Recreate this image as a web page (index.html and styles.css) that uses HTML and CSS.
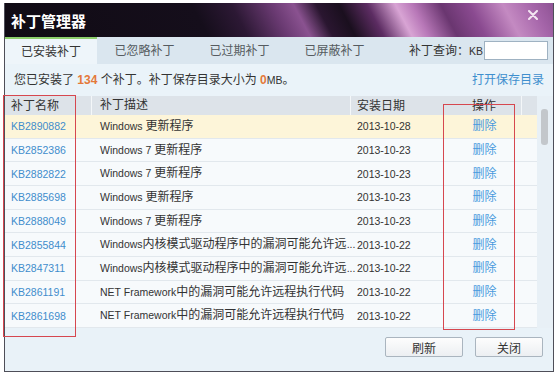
FILE: index.html
```html
<!DOCTYPE html>
<html lang="zh-CN">
<head>
    <meta charset="UTF-8">
    <title>补丁管理器</title>
    <link rel="stylesheet" href="styles.css">
</head>
<body>
    <!-- 对话框 -->
    <div class="dialog">
        <div class="titlebar">
            <div class="title">补丁管理器</div>
            <div class="close">
                <svg viewBox="0 0 10 10" width="10" height="10">
                    <path d="M1 1L9 9M9 1L1 9" stroke="#f3e6f2" stroke-width="2" stroke-linecap="round"/>
                </svg>
            </div>
        </div>

        <!-- 标签页 -->
        <div class="tabs">
            <div class="tab active">已安装补丁</div>
            <div class="tab">已忽略补丁</div>
            <div class="tab">已过期补丁</div>
            <div class="tab">已屏蔽补丁</div>
            <div class="search">
                <span>补丁查询：<span class="lat">KB</span></span>
                <input class="search-input" type="text">
            </div>
        </div>

        <div class="info">
            <div>您已安装了 <b class="num">134</b> 个补丁。补丁保存目录大小为 <b class="num">0</b><span class="lat">MB</span>。</div>
            <a class="link">打开保存目录</a>
        </div>

        <!-- 补丁列表 -->
        <div class="list">
            <div class="table">
                <div class="row head">
                    <div class="cell c-name">补丁名称</div>
                    <div class="cell c-desc">补丁描述</div>
                    <div class="cell c-date">安装日期</div>
                    <div class="cell c-op">操作</div>
                    <div class="cell c-pad"></div>
                </div>
                <div class="row selected">
                    <div class="cell c-name kb">KB2890882</div>
                    <div class="cell c-desc"><span class="lat">Windows </span>更新程序</div>
                    <div class="cell c-date">2013-10-28</div>
                    <div class="cell c-op"><a class="del">删除</a></div>
                    <div class="cell c-pad"></div>
                </div>
                <div class="row">
                    <div class="cell c-name kb">KB2852386</div>
                    <div class="cell c-desc"><span class="lat">Windows 7 </span>更新程序</div>
                    <div class="cell c-date">2013-10-23</div>
                    <div class="cell c-op"><a class="del">删除</a></div>
                    <div class="cell c-pad"></div>
                </div>
                <div class="row">
                    <div class="cell c-name kb">KB2882822</div>
                    <div class="cell c-desc"><span class="lat">Windows 7 </span>更新程序</div>
                    <div class="cell c-date">2013-10-23</div>
                    <div class="cell c-op"><a class="del">删除</a></div>
                    <div class="cell c-pad"></div>
                </div>
                <div class="row">
                    <div class="cell c-name kb">KB2885698</div>
                    <div class="cell c-desc"><span class="lat">Windows </span>更新程序</div>
                    <div class="cell c-date">2013-10-23</div>
                    <div class="cell c-op"><a class="del">删除</a></div>
                    <div class="cell c-pad"></div>
                </div>
                <div class="row">
                    <div class="cell c-name kb">KB2888049</div>
                    <div class="cell c-desc"><span class="lat">Windows 7 </span>更新程序</div>
                    <div class="cell c-date">2013-10-23</div>
                    <div class="cell c-op"><a class="del">删除</a></div>
                    <div class="cell c-pad"></div>
                </div>
                <div class="row">
                    <div class="cell c-name kb">KB2855844</div>
                    <div class="cell c-desc"><span class="lat">Windows</span>内核模式驱动程序中的漏洞可能允许远<span class="lat">...</span></div>
                    <div class="cell c-date">2013-10-22</div>
                    <div class="cell c-op"><a class="del">删除</a></div>
                    <div class="cell c-pad"></div>
                </div>
                <div class="row">
                    <div class="cell c-name kb">KB2847311</div>
                    <div class="cell c-desc"><span class="lat">Windows</span>内核模式驱动程序中的漏洞可能允许远<span class="lat">...</span></div>
                    <div class="cell c-date">2013-10-22</div>
                    <div class="cell c-op"><a class="del">删除</a></div>
                    <div class="cell c-pad"></div>
                </div>
                <div class="row">
                    <div class="cell c-name kb">KB2861191</div>
                    <div class="cell c-desc"><span class="lat">NET Framework</span>中的漏洞可能允许远程执行代码</div>
                    <div class="cell c-date">2013-10-22</div>
                    <div class="cell c-op"><a class="del">删除</a></div>
                    <div class="cell c-pad"></div>
                </div>
                <div class="row">
                    <div class="cell c-name kb">KB2861698</div>
                    <div class="cell c-desc"><span class="lat">NET Framework</span>中的漏洞可能允许远程执行代码</div>
                    <div class="cell c-date">2013-10-22</div>
                    <div class="cell c-op"><a class="del">删除</a></div>
                    <div class="cell c-pad"></div>
                </div>
            </div>
            <div class="scrollbar">
                <div class="thumb"></div>
            </div>
        </div>

        <div class="footer">
            <button class="btn btn-refresh">刷新</button>
            <button class="btn btn-close">关闭</button>
        </div>
    </div>

    <!-- 标注框 -->
    <div class="mark mark-name"></div>
    <div class="mark mark-op"></div>
</body>
</html>
```

FILE: styles.css
```css
/* 기본 */
* {
    margin: 0;
    padding: 0;
    box-sizing: border-box;
}

body {
    width: 559px;
    height: 377px;
    overflow: hidden;
    background: #ffffff;
    font-family: "Liberation Sans", "Noto Sans CJK SC", sans-serif;
    font-size: 12px;
    line-height: 16px;
    color: #333333;
    position: relative;
}

.lat {
    font-size: 10.5px;
}

/* 对话框 */
.dialog {
    margin: 3px 0 0 4px;
    width: 550px;
    height: 369px;
    border: 1px solid #4e4e58;
    border-top: none;
    background: #e9f2f8;
    display: flex;
    flex-direction: column;
}

.titlebar {
    height: 34px;
    display: flex;
    justify-content: space-between;
    align-items: flex-start;
    background:
        linear-gradient(62deg,
            #100b14 0%, #150e1b 36%, #2c1834 43%, #6a3a72 50%,
            #8a5290 54%, #2a1630 58%, #1a0f1e 62%, #5c2c62 67%,
            #d8a4d4 72%, #b878b8 75%, #6a3670 80%, #8a4a90 85%,
            #c48ac2 91%, #a666aa 96%, #8e5294 100%);
}

.title {
    padding: 9px 0 0 6px;
    font-family: "Noto Sans CJK SC", sans-serif;
    font-size: 15px;
    font-weight: bold;
    line-height: 18px;
    color: #ffffff;
}

.close {
    margin: 7px 15px 0 0;
    width: 10px;
    height: 10px;
}

.close svg {
    display: block;
}

/* 标签页 */
.tabs {
    height: 27px;
    display: flex;
    align-items: stretch;
    background: #dae6ef;
}

.tab {
    width: 95px;
    display: flex;
    align-items: center;
    justify-content: center;
    color: #555b60;
}

.tab.active {
    width: 92px;
    background: #eef5fa;
    border-top: 2px solid #8dcf6c;
    color: #333333;
}

.search {
    margin-left: auto;
    padding-right: 5px;
    display: flex;
    align-items: center;
    gap: 1px;
}

.search-input {
    width: 64px;
    height: 19px;
    border: 1px solid #9fb2c2;
    background: #ffffff;
}

/* 提示行 */
.info {
    height: 32px;
    padding: 0 9px;
    display: flex;
    align-items: center;
    justify-content: space-between;
    background: #eaf3f9;
}

.num {
    color: #e4793a;
}

.link {
    color: #3e8fce;
}

/* 列表 */
.list {
    height: 232px;
    display: flex;
}

.table {
    width: 532px;
    display: flex;
    flex-direction: column;
}

.row {
    height: 23.67px;
    display: grid;
    grid-template-columns: 87px 259px 94px 77px 15px;
    background: #f7fafc;
    border-bottom: 1px solid #e2e8ed;
}

.row.head {
    height: 19px;
    background: #dde3e9;
    border-bottom: none;
}

.row.selected {
    background: #fdf5d9;
}

.cell {
    display: flex;
    align-items: center;
    white-space: nowrap;
    overflow: hidden;
}

.c-name {
    padding-left: 6px;
}

.c-desc {
    display: block;
    padding-left: 8px;
    line-height: 22px;
    overflow: visible;
}

.row.head .c-desc {
    line-height: 19px;
}

.c-date {
    padding-left: 6px;
    font-size: 10.5px;
}

.row.head .c-date {
    font-size: 12px;
}

.c-op {
    justify-content: center;
    padding-left: 2px;
}

.row.head .c-name,
.row.head .c-desc,
.row.head .c-op {
    border-right: 1px solid #f4f7f9;
}

.kb {
    font-size: 10.5px;
    color: #3f8dcc;
}

.del {
    color: #4a9ade;
}

.scrollbar {
    width: 16px;
    padding: 13px 0 0 4px;
    background: #e8f0f6;
}

.thumb {
    width: 7px;
    height: 36px;
    border-radius: 3px;
    background: #c3c7cb;
}

/* 底部按钮 */
.footer {
    flex: 1;
    display: flex;
    justify-content: flex-end;
    align-items: flex-start;
    gap: 12px;
    padding: 9px 10px 0 0;
}

.btn {
    height: 20px;
    border: 1px solid #aab5bf;
    border-radius: 2px;
    background: linear-gradient(#fdfdfd, #eceff2);
    font-family: "Noto Sans CJK SC", sans-serif;
    font-size: 12px;
    color: #333333;
}

.btn-refresh {
    width: 78px;
}

.btn-close {
    width: 68px;
}

/* 标注框 */
.mark {
    position: absolute;
    border: 1.5px solid #d6474f;
}

.mark-name {
    left: 3px;
    top: 95px;
    width: 73px;
    height: 242px;
}

.mark-op {
    left: 443px;
    top: 104px;
    width: 72px;
    height: 226px;
}
```
